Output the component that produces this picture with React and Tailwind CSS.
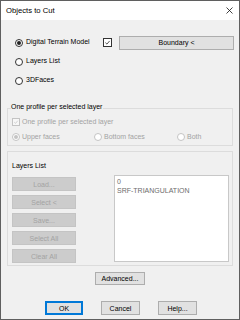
import React from "react";

const Radio = ({ checked, disabled }) => (
  <span
    className={`flex items-center justify-center w-[8px] h-[8px] rounded-full border shrink-0 bg-white ${
      disabled ? "border-[#c4c4c4]" : "border-[#333333]"
    }`}
  >
    {checked && (
      <span className={`w-[4px] h-[4px] rounded-full ${disabled ? "bg-[#c4c4c4]" : "bg-[#222222]"}`} />
    )}
  </span>
);

const Check = ({ size = "w-[9px] h-[9px]", disabled }) => (
  <span
    className={`flex items-center justify-center ${size} border shrink-0 ${
      disabled ? "border-[#c4c4c4] bg-[#f7f7f7]" : "border-[#333333] bg-white"
    }`}
  >
    <svg viewBox="0 0 10 10" className="w-full h-full">
      <path
        d="M2 5.2 L4.2 7.3 L8 2.8"
        fill="none"
        stroke={disabled ? "#bdbdbd" : "#222222"}
        strokeWidth="1.1"
      />
    </svg>
  </span>
);

const Btn = ({ children, className = "", disabled, focused }) => (
  <div
    className={`flex items-center justify-center leading-none ${
      disabled
        ? "bg-[#cccccc] border border-[#c4c4c4] text-[#a3a3a3]"
        : focused
        ? "bg-[#e1e1e1] border-2 border-[#0078d7] text-black"
        : "bg-[#e1e1e1] border border-[#adadad] text-black"
    } ${className}`}
  >
    {children}
  </div>
);

export default function App() {
  return (
    <div className="w-[240px] h-[320px] border border-[#5f5f5f] bg-[#f0f0f0] flex flex-col font-['Liberation_Sans',Arial,sans-serif] text-[7px] text-black overflow-hidden">
      {/* title bar */}
      <div className="h-[19px] bg-white flex items-center justify-between pl-[5px] pr-[6px] shrink-0">
        <span className="text-[7.7px]">Objects to Cut</span>
        <svg viewBox="0 0 7 7" className="w-[7px] h-[7px]">
          <path d="M0.5 0.5 L6.5 6.5 M6.5 0.5 L0.5 6.5" stroke="#111" strokeWidth="0.8" />
        </svg>
      </div>

      {/* source options */}
      <div className="flex flex-col pt-[13px]">
        <div className="flex items-center h-[19px] pl-[14px]">
          <Radio checked />
          <span className="ml-[3px] w-[77px]">Digital Terrain Model</span>
          <Check />
          <Btn className="ml-[7px] w-[115px] h-[14px]">Boundary &lt;</Btn>
        </div>
        <div className="flex items-center h-[19px] pl-[14px]">
          <Radio />
          <span className="ml-[3px]">Layers List</span>
        </div>
        <div className="flex items-center h-[19px] pl-[14px]">
          <Radio />
          <span className="ml-[3px]">3DFaces</span>
        </div>
      </div>

      {/* profile group */}
      <div className="relative mx-[6px] mt-[18px] h-[38px] border border-[#dcdcdc] pt-[7px] pl-[4px]">
        <span className="absolute left-[3px] top-[-7px] bg-[#f0f0f0] pr-[1px] leading-[10px]">
          One profile per selected layer
        </span>
        <div className="flex items-center h-[12px] text-[#a3a3a3]">
          <Check size="w-[8px] h-[8px]" disabled />
          <span className="ml-[2px]">One profile per selected layer</span>
        </div>
        <div className="flex items-center h-[12px] mt-[3px] text-[#a3a3a3]">
          <div className="flex items-center w-[82px]">
            <Radio checked disabled />
            <span className="ml-[2px]">Upper faces</span>
          </div>
          <div className="flex items-center w-[83px]">
            <Radio disabled />
            <span className="ml-[2px]">Bottom faces</span>
          </div>
          <div className="flex items-center">
            <Radio disabled />
            <span className="ml-[2px]">Both</span>
          </div>
        </div>
      </div>

      {/* layers list group */}
      <div className="mx-[6px] mt-[5px] h-[115px] border border-[#dcdcdc] pt-[9px] pl-[4px]">
        <div className="h-[10px] leading-[10px]">Layers List</div>
        <div className="flex mt-[4px]">
          <div className="flex flex-col gap-[4px] mt-[2px] w-[64px]">
            <Btn disabled className="h-[14px]">Load...</Btn>
            <Btn disabled className="h-[14px]">Select &lt;</Btn>
            <Btn disabled className="h-[14px]">Save...</Btn>
            <Btn disabled className="h-[14px]">Select All</Btn>
            <Btn disabled className="h-[14px]">Clear All</Btn>
          </div>
          <div className="ml-[38px] w-[115px] h-[87px] bg-white border border-[#c8c8c8] pt-[2px] pl-[2px] text-[#6d6d6d] leading-[8.5px]">
            <div>0</div>
            <div>SRF-TRIANGULATION</div>
          </div>
        </div>
      </div>

      <Btn className="mx-auto mt-[6px] w-[50px] h-[13px]">Advanced...</Btn>

      <div className="flex mt-[16px]">
        <Btn focused className="ml-[44px] w-[38px] h-[14px]">OK</Btn>
        <Btn className="ml-[18px] w-[39px] h-[14px]">Cancel</Btn>
        <Btn className="ml-[18px] w-[39px] h-[14px]">Help...</Btn>
      </div>
    </div>
  );
}
